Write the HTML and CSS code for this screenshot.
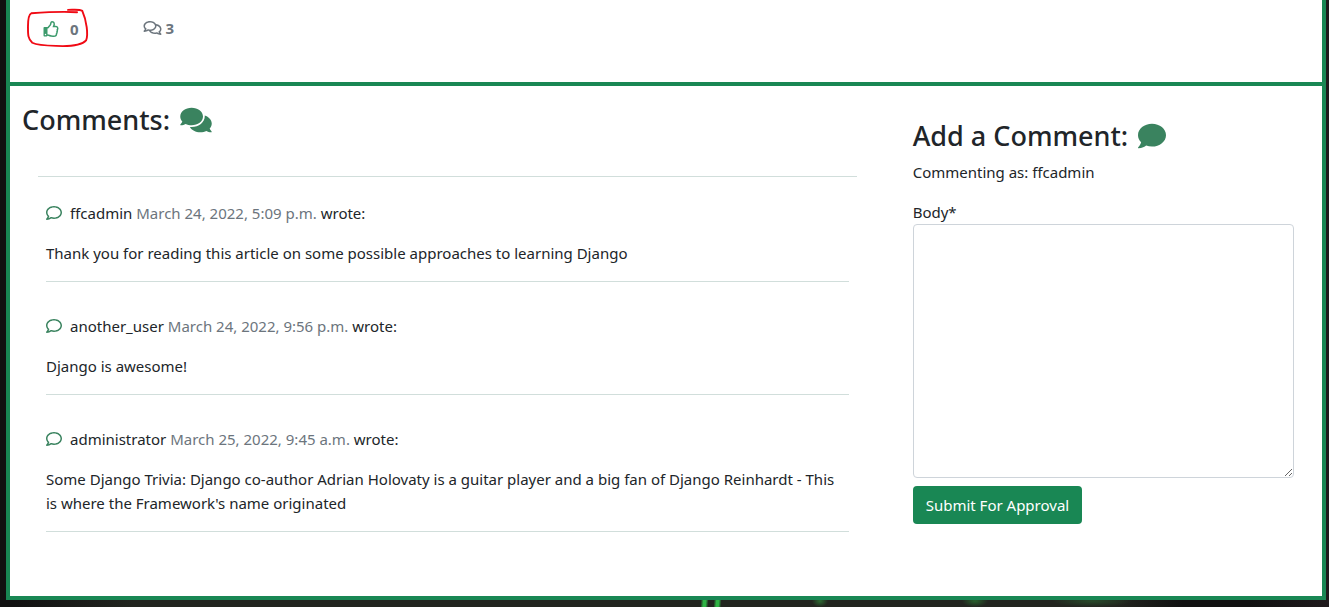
FILE: index.html
```html
<!DOCTYPE html>
<html lang="en">
<head>
<meta charset="utf-8">
<title>Comments</title>
<meta name="viewport" content="width=device-width, initial-scale=1">
<link rel="stylesheet" href="styles.css">
</head>
<body>
<svg class="sprite" aria-hidden="true">
  <symbol id="comment" viewBox="0 0 512 512"><path d="M256 32C114.6 32 0 125.1 0 240c0 47.6 19.9 91.2 52.9 126.3C38 405.7 7 439.1 6.5 439.5c-6.6 7-8.4 17.2-4.6 26S14.4 480 24 480c61.5 0 110-25.7 139.1-46.3C192 442.8 223.2 448 256 448c141.4 0 256-93.1 256-208S397.4 32 256 32zm0 368c-26.7 0-53.1-4.1-78.4-12.1l-22.7-7.2-19.5 13.8c-14.3 10.1-33.9 21.4-57.5 29 7.3-12.1 14.4-25.7 19.9-40.2l10.6-28.1-20.6-21.8C69.7 314.1 48 282.2 48 240c0-88.2 93.3-160 208-160s208 71.8 208 160-93.3 160-208 160z"/></symbol>
</svg>
<main class="page">
  <article class="frame">
    <section class="stats">
      <button class="like" type="button" aria-label="Like, 0 likes">
        <svg class="icon-thumb" viewBox="0 0 512 512"><path d="M466.27 286.69C475.04 271.84 480 256 480 236.85c0-44.015-37.218-85.58-85.82-85.58H357.7c4.92-12.81 8.85-28.13 8.85-46.54C366.55 31.936 328.86 0 271.28 0c-61.607 0-58.093 94.933-71.76 108.6-22.747 22.747-49.615 66.447-68.76 83.4H32c-17.673 0-32 14.327-32 32v240c0 17.673 14.327 32 32 32h64c14.893 0 27.408-10.174 30.978-23.95 44.509 1.001 75.06 39.94 177.802 39.94 7.22 0 15.22.01 22.22.01 77.117 0 111.986-39.423 112.94-95.33 13.319-18.425 20.299-43.122 17.34-66.99 9.854-18.452 13.664-40.343 8.99-62.99zm-61.75 53.83c12.56 21.13 1.26 49.41-13.94 57.57 7.7 48.78-17.608 65.9-53.12 65.9h-37.82c-71.639 0-118.029-37.82-171.64-37.82V240h10.92c28.36 0 67.98-70.89 94.54-97.46 28.36-28.36 18.91-75.63 37.82-94.54 47.27 0 47.27 32.98 47.27 56.73 0 39.17-28.36 56.72-28.36 94.54h103.99c21.11 0 37.73 18.91 37.82 37.82.09 18.9-12.82 37.81-22.27 37.81 13.489 14.555 16.371 45.236-5.21 65.62zM88 432c0 13.255-10.745 24-24 24s-24-10.745-24-24 10.745-24 24-24 24 10.745 24 24z"/></svg>
        <span>0</span>
        <svg class="scribble" viewBox="0 0 66 42" aria-hidden="true"><path d="M53 4.500C40 3.500 19 4.500 5 5.500C2 7 1.500 13 1.500 19C1.500 27 1 32 6 36.500C13 40 27 39.500 38 40C48 40 58 39 62.500 34C65 28 63 13 58.500 3C55 1 49 2 43.500 2"/></svg>
      </button>
      <div class="count">
        <svg class="icon-talk" viewBox="0 0 576 512"><path d="M532 386.200c27.500-27.100 44-61.100 44-98.200 0-80-76.500-146.100-176.200-157.900C368.300 72.500 294.300 32 208 32 93.100 32 0 103.600 0 192c0 37 16.500 71 44 98.200-15.300 30.700-37.300 54.500-37.700 54.900-6.300 6.700-8.100 16.500-4.400 25 3.600 8.500 12 14 21.200 14 53.500 0 96.700-20.200 125.200-38.800 9.200 2.100 18.700 3.700 28.400 4.900C208.100 407.600 281.800 448 368 448c20.800 0 40.800-2.400 59.800-6.800C456.300 459.700 499.400 480 553 480c9.200 0 17.500-5.500 21.200-14 3.600-8.500 1.900-18.300-4.400-25-.4-.3-22.500-24.100-37.800-54.800zm-392.800-92.300L122.100 305c-14.100 9.100-28.500 16.300-43.100 21.400 2.700-4.700 5.400-9.700 8-14.800l15.500-31.100L77.700 256C64.200 242.600 48 220.700 48 192c0-60.700 73.300-112 160-112s160 51.300 160 112-73.300 112-160 112c-16.500 0-33-1.900-49-5.600l-19.800-4.500zM498.300 352l-24.700 24.400 15.500 31.100c2.600 5.100 5.300 10.100 8 14.800-14.600-5.100-29-12.300-43.100-21.400l-17.100-11.100-19.900 4.600c-16 3.700-32.500 5.600-49 5.600-54 0-102.200-20.100-131.300-49.700C338 339.500 416 272.900 416 192c0-3.400-.4-6.700-.7-10C479.700 196.500 528 238.800 528 288c0 28.700-16.200 50.600-29.700 64z"/></svg>
        <span>3</span>
      </div>
    </section>
    <section class="columns">
      <div class="comments">
        <h3 class="title">Comments: <svg class="icon-bubbles" viewBox="0 0 576 512" aria-hidden="true"><path d="M416 192c0-88.400-93.100-160-208-160S0 103.600 0 192c0 34.300 14.100 65.900 38 92-13.400 30.200-35.500 54.200-35.800 54.500-2.200 2.300-2.800 5.700-1.500 8.700S4.800 352 8 352c36.600 0 66.900-12.300 88.700-25 32.200 15.700 70.300 25 111.300 25 114.900 0 208-71.600 208-160zm122 220c23.900-26 38-57.700 38-92 0-66.900-53.500-124.200-129.300-148.100.9 6.600 1.300 13.300 1.300 20.100 0 105.900-107.700 192-240 192-10.800 0-21.300-.8-31.700-1.900C207.800 439.600 281.800 480 368 480c41 0 79.100-9.200 111.300-25 21.800 12.700 52.100 25 88.700 25 3.200 0 6.100-1.900 7.300-4.800 1.300-2.900.7-6.300-1.500-8.700-.3-.3-22.400-24.200-35.800-54.500z"/></svg></h3>
        <div class="list">
          <div class="comment">
            <p class="meta"><svg class="icon-comment" aria-hidden="true"><use href="#comment"/></svg>ffcadmin <time class="muted">March 24, 2022, 5:09 p.m.</time> wrote:</p>
            <p class="text">Thank you for reading this article on some possible approaches to learning Django</p>
          </div>
          <div class="comment">
            <p class="meta"><svg class="icon-comment" aria-hidden="true"><use href="#comment"/></svg>another_user <time class="muted">March 24, 2022, 9:56 p.m.</time> wrote:</p>
            <p class="text">Django is awesome!</p>
          </div>
          <div class="comment">
            <p class="meta"><svg class="icon-comment" aria-hidden="true"><use href="#comment"/></svg>administrator <time class="muted">March 25, 2022, 9:45 a.m.</time> wrote:</p>
            <p class="text">Some Django Trivia: Django co-author Adrian Holovaty is a guitar player and a big fan of Django Reinhardt - This is where the Framework's name originated</p>
          </div>
        </div>
      </div>
      <form class="add">
        <h3 class="title">Add a Comment: <svg class="icon-bubble" viewBox="0 0 512 512" aria-hidden="true"><path d="M256 32C114.600 32 0 125.100 0 240c0 49.600 21.400 95 57 130.700C44.500 421.100 2.700 466 2.200 466.500c-2.200 2.300-2.800 5.700-1.500 8.700S4.800 480 8 480c66.300 0 116-31.800 140.600-51.400 32.700 12.300 69 19.400 107.400 19.400 141.400 0 256-93.100 256-208S397.400 32 256 32z"/></svg></h3>
        <p class="as">Commenting as: ffcadmin</p>
        <label class="label" for="body">Body*</label>
        <textarea class="body" id="body" name="body" rows="10" required></textarea>
        <button class="submit" type="submit">Submit For Approval</button>
      </form>
    </section>
  </article>
</main>
</body>
</html>
```
FILE: styles.css
```css
*, *::before, *::after { box-sizing: border-box; }

body {
  margin: 0;
  background: #111;
  color: #212529;
  font-family: "Noto Sans", "Open Sans", sans-serif;
  font-size: 15px;
  font-weight: 400;
  line-height: 24px;
}

.sprite { display: none; }
svg { fill: currentColor; }
p, h3 { margin: 0; }

.page {
  padding: 0 3px 7px 6px;
  background:
    linear-gradient(95deg, transparent, #2fb344 35%, #2fb344 65%, transparent) 701px 100% / 7px 8px no-repeat,
    linear-gradient(95deg, transparent, #2fb344 35%, #2fb344 65%, transparent) 714px 100% / 7px 8px no-repeat,
    radial-gradient(closest-side, #28602c, transparent) 962px 100% / 26px 12px no-repeat,
    radial-gradient(closest-side, #284a2a, transparent) 1052px 100% / 80px 12px no-repeat,
    radial-gradient(closest-side, #2c6a31, transparent) 812px 100% / 16px 12px no-repeat,
    linear-gradient(90deg, #111 1%, #22251f 10%, #22251f 84%, #111 89%, #111 94%, #1f1a1c);
}

.frame {
  background: #fff;
  border: 4px solid #198754;
  border-top: 0;
}

.stats {
  display: flex;
  align-items: flex-start;
  gap: 56px;
  padding: 8px 16px 34px;
  border-bottom: 4px solid #198754;
  color: #6c757d;
  font-weight: 700;
}

.like, .count {
  display: flex;
  align-items: center;
}

.like {
  position: relative;
  gap: 10px;
  height: 40px;
  padding: 2px 8px 0 17px;
  border: 0;
  background: none;
  color: inherit;
  font: inherit;
}

.count { gap: 4px; height: 40px; }

.scribble {
  position: absolute;
  inset: 0;
  width: 64px;
  height: 40px;
  fill: none;
  stroke: #f00a14;
  stroke-width: 2;
  stroke-linecap: round;
}

.icon-thumb { width: 17px; height: 16px; color: #3c9a6c; }
.icon-talk { width: 19px; height: 16px; }

.columns {
  display: grid;
  grid-template-columns: 2fr 1fr;
}

.comments { padding: 16px 12px 64px; }
.add { padding: 32px 28px 64px; }

.title {
  display: flex;
  align-items: center;
  gap: 10px;
  margin-bottom: 6px;
  font-size: 27px;
  font-weight: 500;
  line-height: 36px;
}

.icon-bubbles { width: 32px; height: 28px; color: #3a835f; }
.icon-bubble { width: 28px; height: 28px; color: #3a835f; }

.list {
  margin: 38px 16px 0;
  padding: 0 8px;
  border-top: 1px solid #d1dedb;
}

.comment {
  padding: 32px 0 16px;
  border-bottom: 1px solid #d1dedb;
}
.comment:first-child { padding-top: 24px; }

.meta { margin-bottom: 16px; }
.muted { color: #6c757d; }

.icon-comment {
  width: 16px;
  height: 16px;
  margin-right: 8px;
  vertical-align: -2px;
  color: #3a835f;
}

.as { margin-bottom: 16px; }
.label { display: block; }

.body {
  display: block;
  width: 100%;
  margin-bottom: 8px;
  padding: 6px 12px;
  border: 1px solid #ced4da;
  border-radius: 4px;
  background: #fff;
  color: inherit;
  font: inherit;
  resize: vertical;
}

.submit {
  height: 38px;
  padding: 0 13px;
  border: 0;
  border-radius: 4px;
  background: #198754;
  color: #fff;
  font: inherit;
}
```
